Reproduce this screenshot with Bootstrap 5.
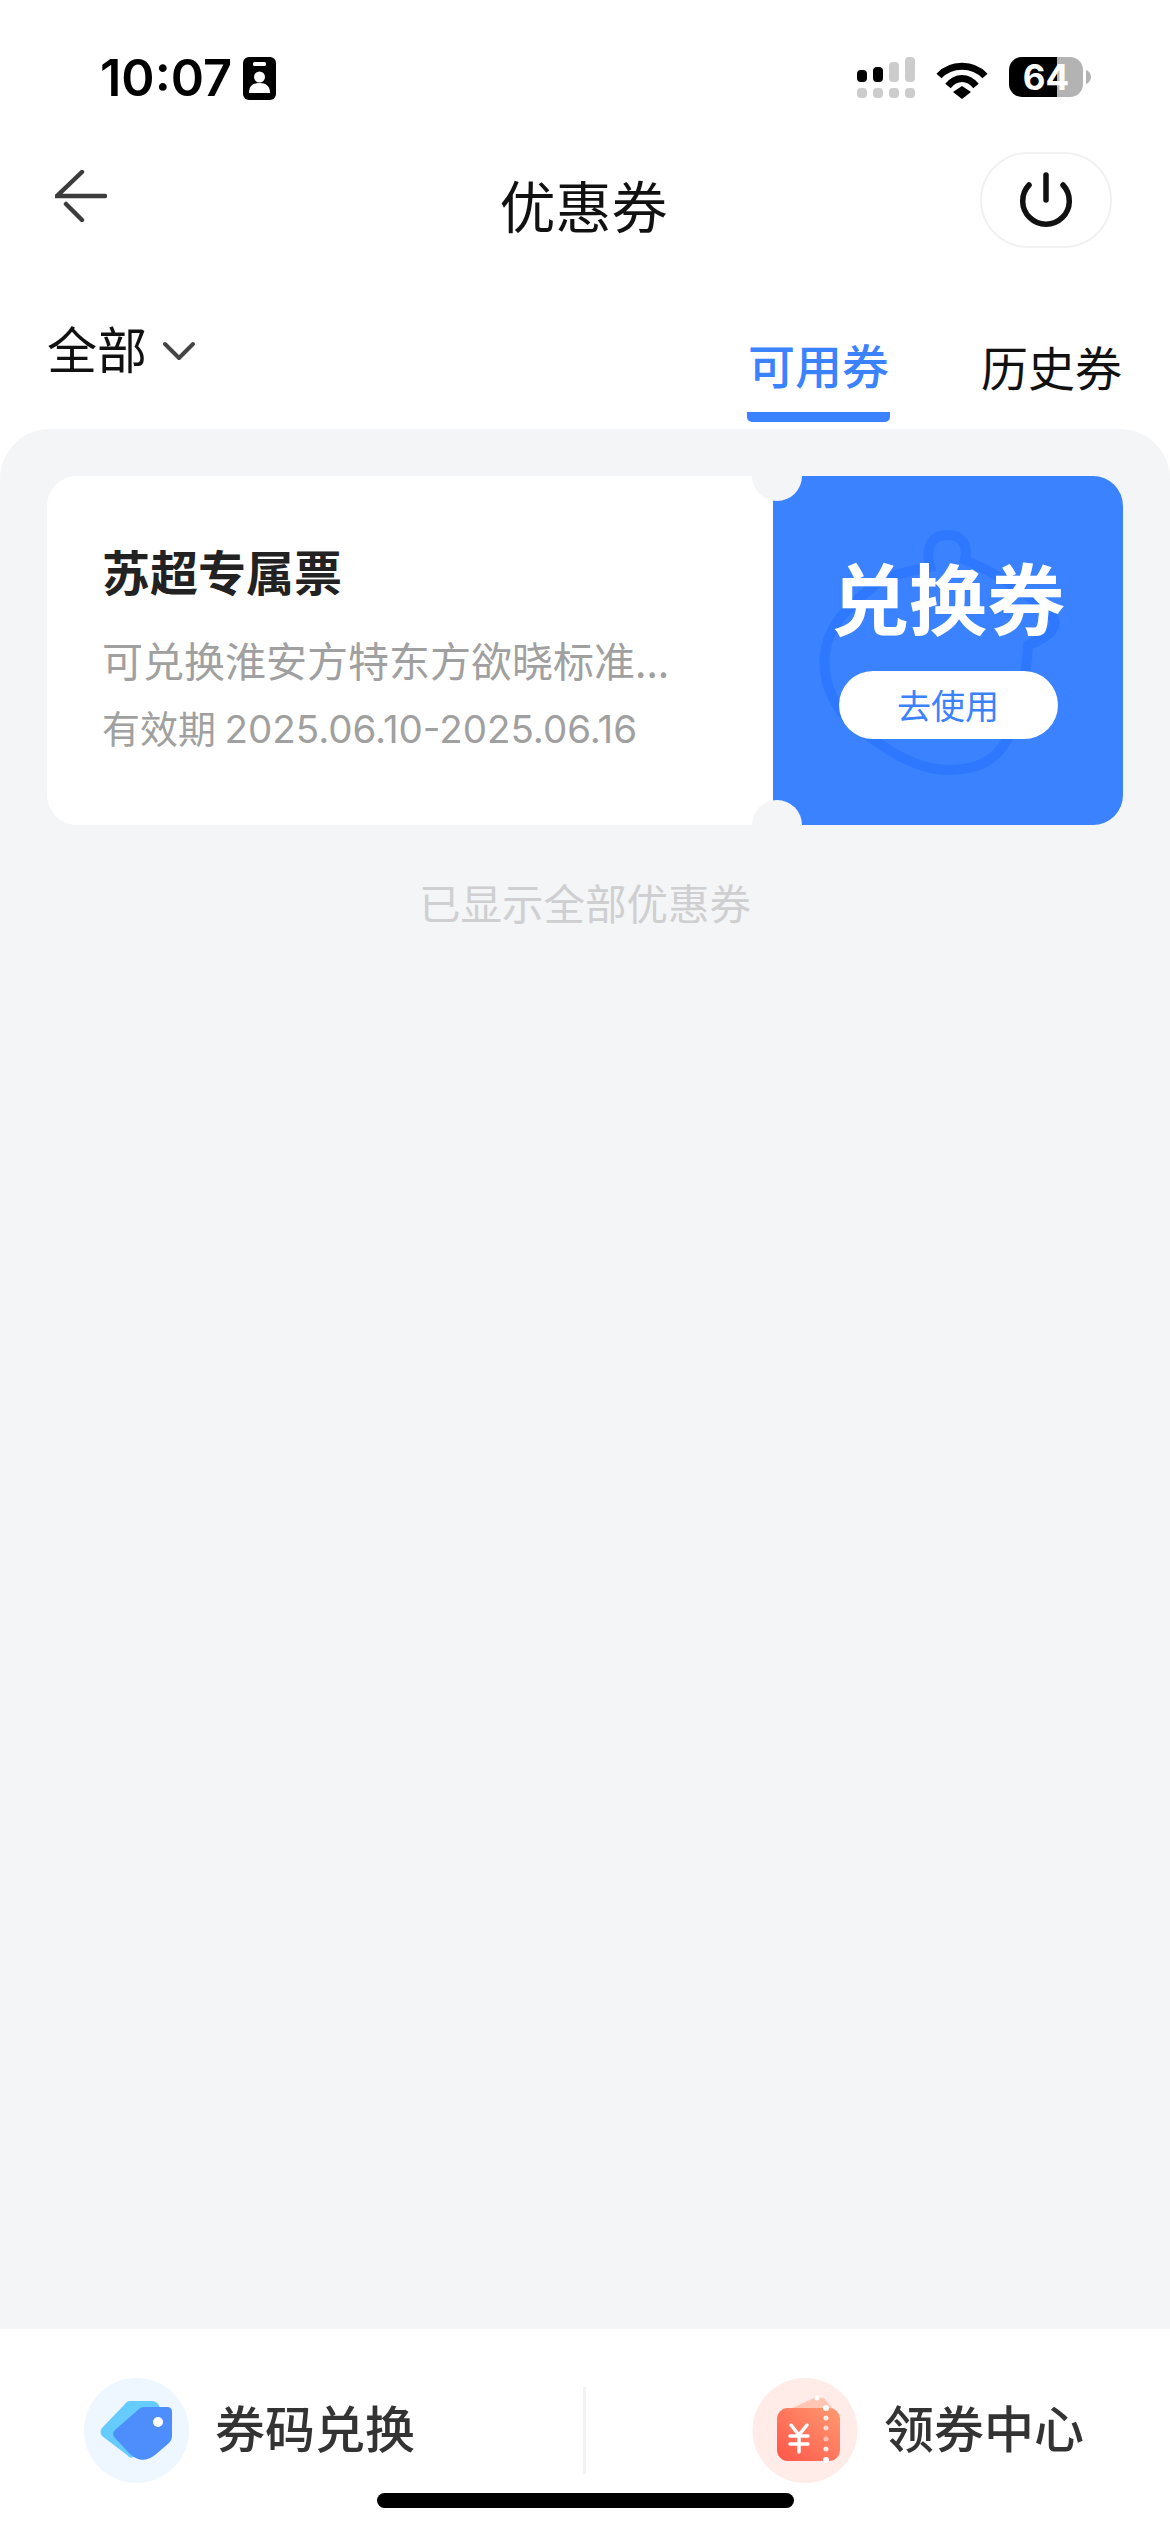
<!doctype html>
<html lang="zh">
<head>
<meta charset="utf-8">
<title>优惠券</title>
<link href="https://cdn.jsdelivr.net/npm/bootstrap@5.3.0/dist/css/bootstrap.min.css" rel="stylesheet">
<style>
html,body{margin:0;background:#fff}
body{font-family:"Noto Sans CJK SC","Noto Sans",sans-serif;color:#111}
.shell{width:1170px;height:2532px;overflow:hidden;position:relative}
.statusbar{height:152px;padding:57px 79px 0 100px}
.clock{font-family:Inter,"Liberation Sans",sans-serif;font-weight:600;font-size:50.500px;line-height:42px;letter-spacing:0;color:#000;margin-right:11px}
.status-right{gap:21px}
.batt{width:74px;height:40px;border-radius:13px;background:linear-gradient(90deg,#000 0,#000 48px,#b3b3b3 48px);color:#fff;font-family:Inter,"Liberation Sans",sans-serif;font-weight:700;font-size:35px;line-height:40px;text-align:center}
.batt-wrap{gap:3px}
.topbar{height:96px;display:grid;grid-template-columns:1fr auto 1fr;padding:0 58px 0 55px}
.back-ic{margin-top:18px}
.page-title{font-size:56px;line-height:56px;margin-top:24px;font-weight:400;color:#111}
.power-btn{width:132px;height:96px;border:2px solid #f1f1f1;border-radius:48px;background:#fff;padding:0}
.filterbar{height:181px;padding:0 48px 0 47px}
.filter-all{font-size:50px;line-height:56px;margin-top:71px;gap:15px;color:#111}
.tabs{gap:91px;padding-bottom:7px}
.tab-item{font-size:47px;line-height:56px;color:#111;padding-bottom:4px;border-bottom:10px solid transparent}
.tab-on{color:#3a82ff;font-weight:500;border-bottom-color:#3a82ff;border-radius:0 0 5px 5px;padding:0 1px 20px;line-height:56px}
.tab-off{padding-bottom:24px;border:0;margin-bottom:4px}
.panel{flex:1 1 auto;background:#f4f5f7;border-radius:50px 50px 0 0;padding:47px 47px 0}
.coupon{height:349px;border-radius:30px;overflow:hidden;position:relative;background:#fff}
.coupon-main{padding:69px 0 0 55px;width:726px;flex:none}
.coupon-name{font-size:48px;line-height:50px;font-weight:700;color:#222}
.coupon-desc{font-size:41px;line-height:46px;color:#a0a0a0;margin-top:41px;white-space:nowrap}
.coupon-date{font-size:38px;line-height:46px;color:#a0a0a0;margin-top:22px;white-space:nowrap}
.date-num{font-family:Inter,"Liberation Sans",sans-serif;font-size:38.500px}
.coupon-side{flex:1 1 auto;background:#3a82ff;position:relative;padding-top:73px;color:#fff}
.side-mark{position:absolute;left:40px;top:48px}
.side-title{position:relative;font-size:78px;line-height:94px;font-weight:700}
.use-btn{position:relative;width:219px;height:68px;margin-top:28px;border-radius:34px;background:#fff;color:#3a82ff;font-size:34px;line-height:68px;padding:0;border:0;font-weight:400}
.use-btn:hover{background:#fff;color:#3a82ff}
.notch{position:absolute;left:705px;width:50px;height:50px;border-radius:50%;background:#f4f5f7}
.notch-t{top:-25px}
.notch-b{bottom:-25px}
.all-shown{font-size:41.500px;line-height:50px;color:#cfcfd1;margin-top:52px}
.bottombar{height:203px;flex:none;background:#fff;position:relative}
.act{height:106px;margin-top:49px;gap:26px;font-size:50px;line-height:96px;color:#333;font-weight:500}
.act-l{padding-left:84px}
.act-r{padding-left:167px}
.act-div{position:absolute;left:583px;top:58px;width:3px;height:87px;background:#f3f3f3}
.home-ind{position:absolute;left:377px;top:164px;width:417px;height:15px;border-radius:8px;background:#000}
</style>
</head>
<body>
<div class="shell d-flex flex-column">

  <div class="statusbar d-flex justify-content-between align-items-start">
    <div class="d-flex align-items-start">
      <span class="clock">10:07</span>
      <svg width="33" height="43" viewBox="0 0 33 43"><rect width="33" height="43" rx="6" fill="#000"/><rect x="10" y="5" width="13" height="4" rx="1.5" fill="#fff"/><circle cx="16.500" cy="20" r="5.500" fill="#fff"/><path d="M6 36c0-7 4-10 10.500-10S27 29 27 36z" fill="#fff"/></svg>
    </div>
    <div class="status-right d-flex align-items-start">
      <svg width="58" height="41" viewBox="0 0 58 41"><g fill="#000"><rect x="0" y="13" width="10" height="12" rx="4"/><rect x="16" y="10" width="10" height="15" rx="4"/></g><g fill="#ccc"><rect x="32" y="5" width="10" height="20" rx="4"/><rect x="48" y="0" width="10" height="25" rx="4"/><rect x="0" y="31" width="10" height="10" rx="4"/><rect x="16" y="31" width="10" height="10" rx="4"/><rect x="32" y="31" width="10" height="10" rx="4"/><rect x="48" y="31" width="10" height="10" rx="4"/></g></svg>
      <svg width="52" height="38" viewBox="0 0 52 38" class="mt-1"><g fill="none" stroke="#000" stroke-width="7"><path d="M3 15C15 2 37 2 49 15"/><path d="M12 25C20 15 32 15 40 25"/></g><path d="M17 31L26 25L35 31L26 38Z" fill="#000"/></svg>
      <div class="batt-wrap d-flex align-items-center">
        <div class="batt">64</div>
        <svg width="5" height="14" viewBox="0 0 5 14"><path d="M0 0c3 1 5 4 5 7s-2 6-5 7z" fill="#b3b3b3"/></svg>
      </div>
    </div>
  </div>

  <div class="topbar">
    <div>
      <svg class="back-ic" width="52" height="52" viewBox="0 0 52 52" fill="none" stroke="#3c3c3c" stroke-width="4.500" stroke-linecap="round"><path d="M27 2L2 26H50"/><path d="M11 34L27 50"/></svg>
    </div>
    <div class="page-title text-center">优惠券</div>
    <div class="d-flex justify-content-end">
      <button class="power-btn btn d-flex align-items-center justify-content-center" type="button" aria-label="退出">
        <svg width="56" height="56" viewBox="0 0 56 56" fill="none" stroke="#111" stroke-width="5.500" stroke-linecap="round"><path d="M11 13A23.300 23.300 0 1 0 45 13"/><path d="M28 3V28"/></svg>
      </button>
    </div>
  </div>

  <div class="filterbar d-flex justify-content-between align-items-start">
    <div class="filter-all d-flex align-items-center">
      <span>全部</span>
      <svg width="34" height="20" viewBox="0 0 34 20" class="mt-2" fill="none" stroke="#444" stroke-width="4" stroke-linecap="round" stroke-linejoin="round"><path d="M3 3L17 17L31 3"/></svg>
    </div>
    <div class="tabs d-flex align-items-end align-self-end">
      <div class="tab-item tab-on">可用券</div>
      <div class="tab-item tab-off">历史券</div>
    </div>
  </div>

  <div class="panel">
    <div class="coupon d-flex">
      <div class="coupon-main">
        <div class="coupon-name">苏超专属票</div>
        <div class="coupon-desc">可兑换淮安方特东方欲晓标准...</div>
        <div class="coupon-date">有效期 <span class="date-num">2025.06.10-2025.06.16</span></div>
      </div>
      <div class="coupon-side text-center">
        <svg class="side-mark" width="250" height="260" viewBox="0 0 250 260" fill="none" stroke="#2e78ff" stroke-width="10"><path d="M117 43C112 20 120 11 135 11C150 11 155 22 152 36C185 50 215 70 238 90C246 100 240 112 215 121C213 150 210 190 194 216C180 240 160 246 135 246C110 246 85 233 64 218C45 205 33 195 27 186C14 165 10 150 12 130C15 105 27 89 64 59C80 50 100 46 117 43Z"/></svg>
        <div class="side-title">兑换券</div>
        <button class="use-btn btn" type="button">去使用</button>
      </div>
      <span class="notch notch-t"></span>
      <span class="notch notch-b"></span>
    </div>
    <div class="all-shown text-center">已显示全部优惠券</div>
  </div>

  <div class="bottombar">
    <div class="row g-0">
      <div class="col-6">
        <div class="act act-l d-flex align-items-start">
          <svg width="105" height="105" viewBox="0 0 105 105"><circle cx="52.500" cy="52.500" r="52.500" fill="#eef6ff"/><path d="M45 23H68Q74 23 76 30L50 78Q47 82 43 77L18 58Q15 54 18 50L41 26Q43 23 45 23Z" fill="#66ccff"/><path d="M60 29H83Q88 29 88 34V58Q88 62 85 65L71 77Q58 87 46 76L31 60Q27 56 31 52L55 31Q57 29 60 29Z" fill="#4d8dfc"/><circle cx="74" cy="44" r="5" fill="#fff"/></svg>
          <span>券码兑换</span>
        </div>
      </div>
      <div class="col-6">
        <div class="act act-r d-flex align-items-start">
          <svg width="106" height="105" viewBox="0 0 106 105"><defs><linearGradient id="rg" x1="0" y1="1" x2="1" y2="0"><stop offset="0" stop-color="#ff5548"/><stop offset="1" stop-color="#ff9a72"/></linearGradient></defs><circle cx="53" cy="52.500" r="52.500" fill="#ffece8"/><path d="M38 31L64 19L72 20L82 32V40H38Z" fill="#ffc6b4"/><rect x="25" y="30" width="63" height="53" rx="11" fill="url(#rg)"/><g fill="none" stroke="#fff" stroke-width="3.500" stroke-linecap="round"><path d="M39 47L47 57L55 47"/><path d="M38 58H56"/><path d="M38 66H56"/><path d="M47 57V74"/></g><g fill="#fff"><circle cx="74" cy="40" r="2.500" opacity=".85"/><circle cx="74" cy="50" r="2.500" opacity=".7"/><circle cx="74" cy="61" r="2.500" opacity=".5"/><circle cx="74" cy="71" r="2.500" opacity=".85"/><circle cx="74" cy="30" r="3"/><circle cx="74" cy="82" r="3"/><circle cx="65" cy="20" r="2.500"/></g></svg>
          <span>领券中心</span>
        </div>
      </div>
    </div>
    <div class="act-div"></div>
    <div class="home-ind"></div>
  </div>
</div>
<script src="https://cdn.jsdelivr.net/npm/bootstrap@5.3.0/dist/js/bootstrap.bundle.min.js"></script>
</body>
</html>
